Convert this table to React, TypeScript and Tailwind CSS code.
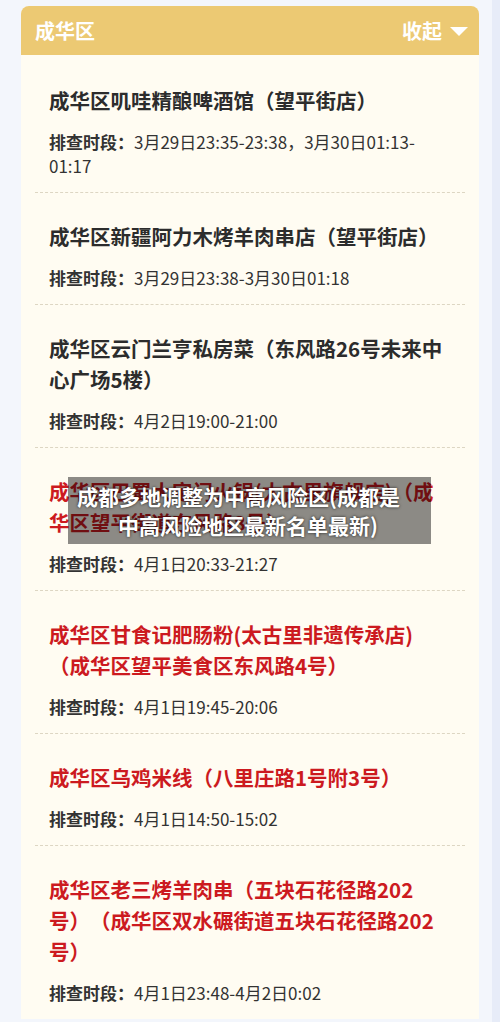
type Place = {
  title: string
  red?: boolean
  time: React.ReactNode
}

// 列表数据：红色条目为新增的中高风险点位
const PLACES: Place[] = [
  {
    title: '成华区叽哇精酿啤酒馆（望平街店）',
    time: (
      <>
        3月29日23:35-23:38，3月30日01:13-
        <wbr />
        01:17
      </>
    ),
  },
  { title: '成华区新疆阿力木烤羊肉串店（望平街店）', time: '3月29日23:38-3月30日01:18' },
  { title: '成华区云门兰亨私房菜（东风路26号未来中心广场5楼）', time: '4月2日19:00-21:00' },
  { title: '成华区巴蜀大宅门火锅(太古里旗舰店)（成华区望平街道东风路8号）', red: true, time: '4月1日20:33-21:27' },
  { title: '成华区甘食记肥肠粉(太古里非遗传承店)（成华区望平美食区东风路4号）', red: true, time: '4月1日19:45-20:06' },
  { title: '成华区乌鸡米线（八里庄路1号附3号）', red: true, time: '4月1日14:50-15:02' },
  {
    title: '成华区老三烤羊肉串（五块石花径路202号）（成华区双水碾街道五块石花径路202号）',
    red: true,
    time: '4月1日23:48-4月2日0:02',
  },
]

function PlaceRow({ place, last }: { place: Place; last: boolean }) {
  return (
    <div className={last ? 'pt-[28px] pb-[14px]' : 'border-b border-dashed border-[#ddd6c3] pt-[28px] pb-[14px]'}>
      <div className="pl-[14px] pr-[16px]">
        <div
          className={
            'text-[20.5px] font-bold leading-[31px] [text-spacing-trim:space-all] ' +
            (place.red ? 'text-[#cc1a1f]' : 'text-[#2c2c2c]')
          }
        >
          {place.title}
        </div>
        <div className="mt-[14px] text-[17px] leading-[24px] text-[#333333]">
          <span className="font-bold">排查时段：</span>
          {place.time}
        </div>
      </div>
    </div>
  )
}

export default function App() {
  return (
    <div className="relative flex min-h-[1022px] bg-[#f3f6fc] font-['Noto_Sans_CJK_SC','Noto_Sans',sans-serif]">
      <div className="flex-1 pt-[6px] pl-[21px] pr-[13px]">
        <div className="overflow-hidden rounded-t-[8px] bg-[#fffcf2]">
          <div className="flex h-[49px] items-center justify-between bg-[#ecc973] pl-[14px] pr-[11px] text-white">
            <span className="text-[20px] font-bold">成华区</span>
            <span className="flex items-center gap-[8px] text-[20px] font-bold">
              收起
              <svg width="18" height="9" viewBox="0 0 18 9" className="mt-[1px]">
                <path d="M0 0 H18 L9 9 Z" fill="#ffffff" />
              </svg>
            </span>
          </div>
          <div className="px-[14px] pt-[2px]">
            {PLACES.map((place, i) => (
              <PlaceRow key={place.title} place={place} last={i === PLACES.length - 1} />
            ))}
          </div>
        </div>
      </div>
      <div className="w-[8px] bg-[#e7ecf8]" />

      {/* 页面上叠加的标题水印条 */}
      <div className="absolute left-[68px] top-[477px] flex h-[67px] w-[363px] flex-col justify-center bg-black/45 text-[21px] font-bold leading-[29px] text-white [text-shadow:0_0_3px_rgba(0,0,0,0.8)]">
        <div className="pl-[9px] whitespace-nowrap">成都多地调整为中高风险区(成都是</div>
        <div className="pl-[50px] whitespace-nowrap">中高风险地区最新名单最新)</div>
      </div>
    </div>
  )
}
